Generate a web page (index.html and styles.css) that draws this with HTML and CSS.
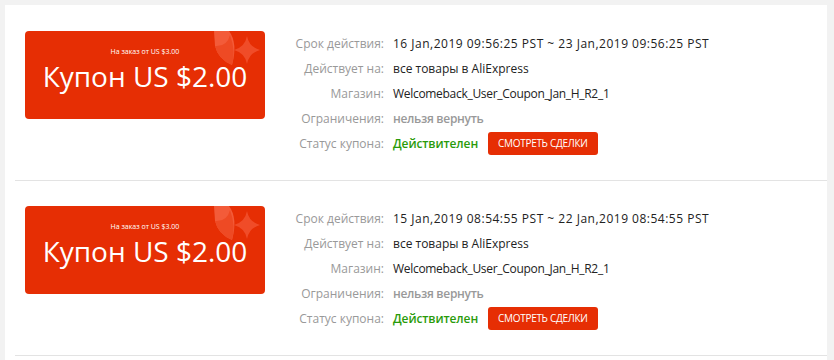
FILE: index.html
```html
<!DOCTYPE html>
<html lang="ru">
<head>
  <meta charset="UTF-8">
  <meta name="viewport" content="width=device-width, initial-scale=1.0">
  <title>Мои купоны</title>
  <link rel="stylesheet" href="styles.css">
</head>
<body>
  <div class="panel">
    <ul class="coupon-list">
      <li class="coupon-item">
        <div class="coupon-card">
          <svg class="coupon-deco" width="80" height="40" viewBox="0 0 80 40">
            <path d="M29 0 H44 Q53 12 47 34 Q33 28 30 15 Z" fill="#f4613f" opacity="0.9"/>
            <path d="M30 15 Q33 28 47 34 Q51 20 45 4 Q42 16 30 15 Z" fill="#ee4a24"/>
            <path d="M62 5 Q64 16 75 19 Q64 22 62 33 Q60 22 49 19 Q60 16 62 5 Z" fill="#f04c28"/>
          </svg>
          <div class="coupon-min">На заказ от US $3.00</div>
          <div class="coupon-value">Купон US $2.00</div>
        </div>
        <div class="coupon-info">
          <div class="info-row"><span class="info-label">Срок действия:</span><span class="info-value date">16 Jan,2019 09:56:25 PST ~ 23 Jan,2019 09:56:25 PST</span></div>
          <div class="info-row"><span class="info-label">Действует на:</span><span class="info-value">все товары в AliExpress</span></div>
          <div class="info-row"><span class="info-label">Магазин:</span><span class="info-value store">Welcomeback_User_Coupon_Jan_H_R2_1</span></div>
          <div class="info-row"><span class="info-label">Ограничения:</span><span class="info-value muted">нельзя вернуть</span></div>
          <div class="info-row"><span class="info-label">Статус купона:</span><span class="info-value valid">Действителен</span><a href="#" class="btn-deals">СМОТРЕТЬ СДЕЛКИ</a></div>
        </div>
      </li>
      <li class="coupon-item">
        <div class="coupon-card">
          <svg class="coupon-deco" width="80" height="40" viewBox="0 0 80 40">
            <path d="M29 0 H44 Q53 12 47 34 Q33 28 30 15 Z" fill="#f4613f" opacity="0.9"/>
            <path d="M30 15 Q33 28 47 34 Q51 20 45 4 Q42 16 30 15 Z" fill="#ee4a24"/>
            <path d="M62 5 Q64 16 75 19 Q64 22 62 33 Q60 22 49 19 Q60 16 62 5 Z" fill="#f04c28"/>
          </svg>
          <div class="coupon-min">На заказ от US $3.00</div>
          <div class="coupon-value">Купон US $2.00</div>
        </div>
        <div class="coupon-info">
          <div class="info-row"><span class="info-label">Срок действия:</span><span class="info-value date">15 Jan,2019 08:54:55 PST ~ 22 Jan,2019 08:54:55 PST</span></div>
          <div class="info-row"><span class="info-label">Действует на:</span><span class="info-value">все товары в AliExpress</span></div>
          <div class="info-row"><span class="info-label">Магазин:</span><span class="info-value store">Welcomeback_User_Coupon_Jan_H_R2_1</span></div>
          <div class="info-row"><span class="info-label">Ограничения:</span><span class="info-value muted">нельзя вернуть</span></div>
          <div class="info-row"><span class="info-label">Статус купона:</span><span class="info-value valid">Действителен</span><a href="#" class="btn-deals">СМОТРЕТЬ СДЕЛКИ</a></div>
        </div>
      </li>
    </ul>
  </div>
</body>
</html>
```

FILE: styles.css
```css
body {
  margin: 0;
  font-family: "Open Sans", "Liberation Sans", sans-serif;
  background-color: #f2f2f2;
  color: #333;
}

.panel {
  margin: 5px 0 0 5px;
  width: 822px;
  background-color: #fff;
  padding: 1px 0 0 10px;
  box-sizing: border-box;
  min-height: 360px;
}

.coupon-list {
  list-style: none;
  margin: 0;
  padding: 0;
}

.coupon-item {
  display: flex;
  align-items: flex-start;
  padding: 25px 0 0 10px;
  height: 175px;
  box-sizing: border-box;
  border-bottom: 1px solid #e3e3e3;
}

.coupon-card {
  position: relative;
  width: 240px;
  height: 88px;
  border-radius: 4px;
  background-color: #e62e04;
  color: #fff;
  text-align: center;
  overflow: hidden;
  flex-shrink: 0;
}

.coupon-deco {
  position: absolute;
  top: 0;
  right: 0;
}

.coupon-min {
  position: relative;
  margin-top: 17px;
  font-size: 7px;
  line-height: 8px;
}

.coupon-value {
  position: relative;
  font-size: 28px;
  line-height: 40px;
}

.coupon-info {
  margin-left: 19px;
  font-size: 12px;
}

.info-row {
  display: flex;
  align-items: center;
  height: 25px;
}

.info-label {
  width: 100px;
  text-align: right;
  color: #999;
  margin-right: 9px;
}

.info-value {
  color: #222;
}

.info-value.date {
  letter-spacing: 0.5px;
}

.info-value.store {
  letter-spacing: -0.3px;
}

.info-value.muted {
  color: #999;
  font-weight: 600;
  letter-spacing: -0.3px;
}

.info-value.valid {
  color: #2a9b0a;
  font-weight: 600;
  letter-spacing: -0.1px;
}

.btn-deals {
  margin-left: 10px;
  background-color: #e62e04;
  color: #fff;
  font-size: 10px;
  letter-spacing: -0.3px;
  padding: 0 10px;
  height: 23px;
  line-height: 23px;
  border-radius: 3px;
  text-decoration: none;
}
```
